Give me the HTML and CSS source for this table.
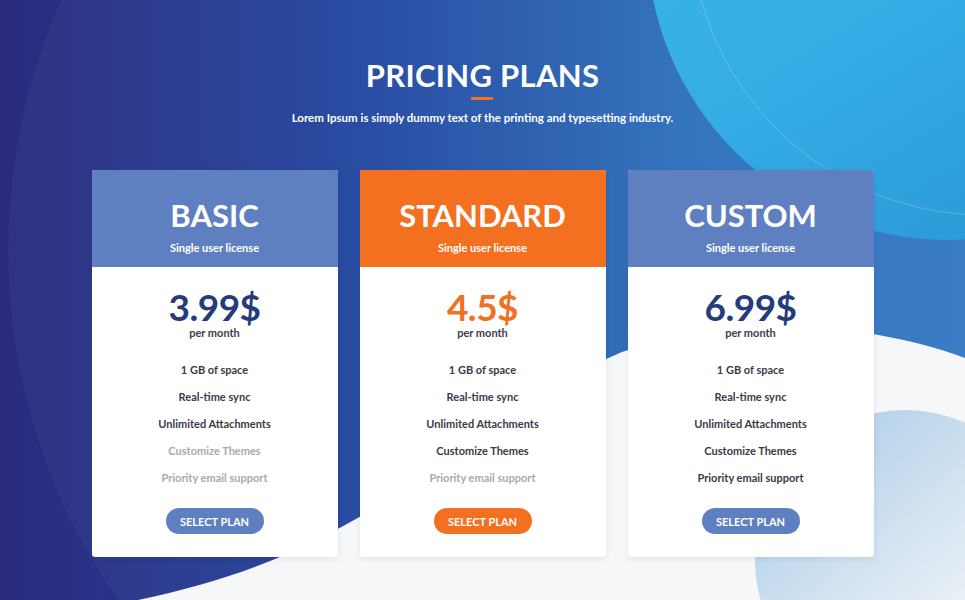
FILE: index.html
```html
<!DOCTYPE html>
<html lang="en">
<head>
<meta charset="utf-8">
<title>Pricing Plans</title>
<link rel="stylesheet" href="styles.css">
</head>
<body>
<div class="page">
  <svg class="bg" viewBox="0 0 965 600" width="965" height="600" aria-hidden="true">
    <defs>
      <linearGradient id="bgGrad" x1="0" y1="0" x2="1" y2="0">
        <stop offset="0" stop-color="#2a2a7c"/>
        <stop offset="0.35" stop-color="#22449e"/>
        <stop offset="0.7" stop-color="#2d6ebb"/>
        <stop offset="1" stop-color="#3478c4"/>
      </linearGradient>
      <linearGradient id="topCircle" x1="0" y1="0" x2="0.6" y2="1">
        <stop offset="0" stop-color="#3cbdee"/>
        <stop offset="0.6" stop-color="#35aee6"/>
        <stop offset="1" stop-color="#2c9ad8"/>
      </linearGradient>
      <linearGradient id="botCircle" x1="0.15" y1="0.1" x2="0.75" y2="0.8">
        <stop offset="0" stop-color="#b0cfe9"/>
        <stop offset="1" stop-color="#f6f7f9"/>
      </linearGradient>
    </defs>
    <rect x="0" y="0" width="965" height="600" fill="url(#bgGrad)"/>
    <circle cx="620" cy="250" r="612" fill="#ffffff" fill-opacity="0.035"/>
    <circle cx="948" cy="-61" r="301" fill="url(#topCircle)"/>
    <circle cx="985" cy="-80" r="295" fill="none" stroke="#ffffff" stroke-opacity="0.22" stroke-width="1"/>
    <path d="M138,600 C235,580 302,552 378,506 C470,448 540,386 622,352 C720,318 860,318 965,358 L965,600 Z" fill="#f6f7f9"/>
    <circle cx="905" cy="560" r="150" fill="url(#botCircle)"/>
  </svg>

  <main class="content">
    <header class="intro">
      <h1 class="intro-title">PRICING PLANS</h1>
      <span class="intro-rule"></span>
      <p class="intro-text">Lorem Ipsum is simply dummy text of the printing and typesetting industry.</p>
    </header>

    <section class="plans">
      <article class="plan">
        <div class="plan-head">
          <h2 class="plan-name">BASIC</h2>
          <p class="plan-license">Single user license</p>
        </div>
        <div class="plan-body">
          <div class="plan-price">3.99$</div>
          <div class="plan-period">per month</div>
          <ul class="plan-features">
            <li>1 GB of space</li>
            <li>Real-time sync</li>
            <li>Unlimited Attachments</li>
            <li class="off">Customize Themes</li>
            <li class="off">Priority email support</li>
          </ul>
          <button class="plan-btn" type="button">SELECT PLAN</button>
        </div>
      </article>

      <article class="plan plan-featured">
        <div class="plan-head">
          <h2 class="plan-name">STANDARD</h2>
          <p class="plan-license">Single user license</p>
        </div>
        <div class="plan-body">
          <div class="plan-price">4.5$</div>
          <div class="plan-period">per month</div>
          <ul class="plan-features">
            <li>1 GB of space</li>
            <li>Real-time sync</li>
            <li>Unlimited Attachments</li>
            <li>Customize Themes</li>
            <li class="off">Priority email support</li>
          </ul>
          <button class="plan-btn" type="button">SELECT PLAN</button>
        </div>
      </article>

      <article class="plan">
        <div class="plan-head">
          <h2 class="plan-name">CUSTOM</h2>
          <p class="plan-license">Single user license</p>
        </div>
        <div class="plan-body">
          <div class="plan-price">6.99$</div>
          <div class="plan-period">per month</div>
          <ul class="plan-features">
            <li>1 GB of space</li>
            <li>Real-time sync</li>
            <li>Unlimited Attachments</li>
            <li>Customize Themes</li>
            <li>Priority email support</li>
          </ul>
          <button class="plan-btn" type="button">SELECT PLAN</button>
        </div>
      </article>
    </section>
  </main>
</div>
</body>
</html>
```
FILE: styles.css
```css
* {
  box-sizing: border-box;
}

html, body {
  margin: 0;
  padding: 0;
}

body {
  font-family: "Lato", "Open Sans", "Liberation Sans", sans-serif;
  background: #f6f7f9;
}

.page {
  position: relative;
  width: 965px;
  height: 600px;
  overflow: hidden;
}

.bg {
  position: absolute;
  left: 0;
  top: 0;
  display: block;
}

.content {
  position: relative;
  display: flex;
  flex-direction: column;
  align-items: center;
  padding-top: 56px;
}

.intro {
  display: flex;
  flex-direction: column;
  align-items: center;
  color: #ffffff;
}

.intro-title {
  margin: 0;
  font-size: 31px;
  line-height: 38px;
  font-weight: 700;
  letter-spacing: 0.3px;
}

.intro-rule {
  display: block;
  width: 22px;
  height: 3px;
  background: #f37021;
  margin-top: 3px;
}

.intro-text {
  margin: 11px 0 0;
  font-size: 11.5px;
  line-height: 14px;
  font-weight: 700;
}

.plans {
  display: flex;
  gap: 22px;
  margin-top: 45px;
}

.plan {
  width: 246px;
  background: #ffffff;
  border-radius: 3px;
  overflow: hidden;
  box-shadow: 0 2px 6px rgba(20, 30, 80, 0.08);
}

.plan-head {
  height: 97px;
  background: #5f80c0;
  color: #ffffff;
  text-align: center;
  padding-top: 28px;
}

.plan-featured .plan-head {
  background: #f37021;
}

.plan-name {
  margin: 0;
  font-size: 31px;
  line-height: 34px;
  font-weight: 700;
}

.plan-license {
  margin: 9px 0 0;
  font-size: 11px;
  line-height: 14px;
  font-weight: 700;
}

.plan-body {
  display: flex;
  flex-direction: column;
  align-items: center;
  padding: 23px 0 23px;
}

.plan-price {
  font-size: 37px;
  line-height: 33px;
  font-weight: 700;
  letter-spacing: -0.5px;
  color: #253b7b;
}

.plan-featured .plan-price {
  color: #f37021;
}

.plan-period {
  font-size: 11px;
  line-height: 14px;
  font-weight: 700;
  color: #3d3d4a;
  margin-top: 3px;
}

.plan-features {
  list-style: none;
  margin: 23px 0 0;
  padding: 0;
  display: flex;
  flex-direction: column;
  align-items: center;
  gap: 13px;
}

.plan-features li {
  font-size: 11px;
  line-height: 14px;
  font-weight: 700;
  color: #3a3a48;
}

.plan-features li.off {
  color: #a9a9ad;
}

.plan-btn {
  margin-top: 23px;
  width: 98px;
  height: 26px;
  border: 0;
  border-radius: 13px;
  background: #5f80c0;
  color: #ffffff;
  font-family: inherit;
  font-size: 11px;
  font-weight: 700;
  padding: 0;
  cursor: pointer;
}

.plan-featured .plan-btn {
  background: #f37021;
}
```
